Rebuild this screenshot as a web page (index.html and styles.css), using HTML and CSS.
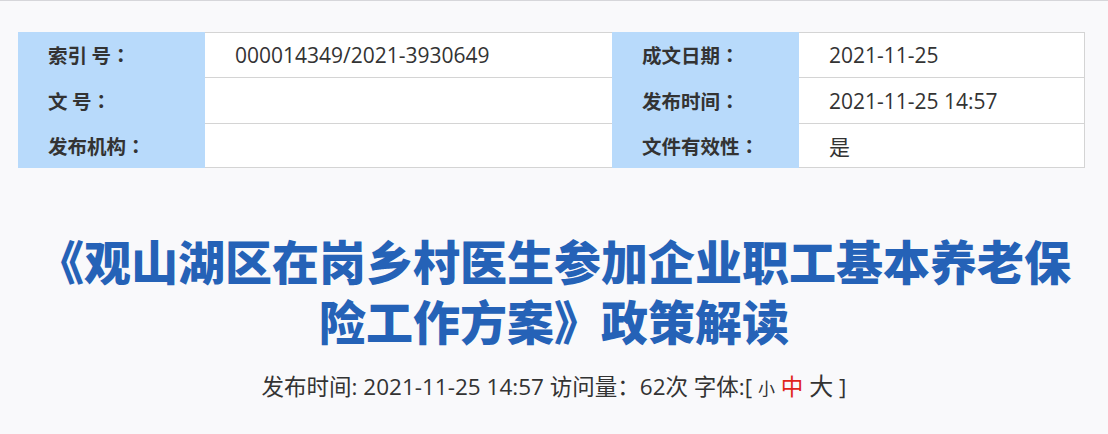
FILE: index.html
```html
<!DOCTYPE html>
<html lang="zh-CN">
<head>
<meta charset="utf-8">
<link rel="stylesheet" href="styles.css">
</head>
<body>
<div class="page">
  <div class="info">
    <div class="lab">索引 号<span class="c">：</span></div>
    <div class="val">000014349/2021-3930649</div>
    <div class="lab">成文日期<span class="c">：</span></div>
    <div class="val last">2021-11-25</div>
    <div class="lab">文 号<span class="c">：</span></div>
    <div class="val"></div>
    <div class="lab">发布时间<span class="c">：</span></div>
    <div class="val last">2021-11-25 14:57</div>
    <div class="lab">发布机构<span class="c">：</span></div>
    <div class="val bottom"></div>
    <div class="lab">文件有效性<span class="c">：</span></div>
    <div class="val last bottom">是</div>
  </div>
  <h1 class="title">《观山湖区在岗乡村医生参加企业职工基本养老保险工作方案》政策解读</h1>
  <div class="meta">发布时间: 2021-11-25 14:57 访问量<span class="c">：</span>62次 字体:[ <span class="s">小</span> <span class="m">中</span> <span class="l">大</span> ]</div>
</div>
</body>
</html>
```
FILE: styles.css
```css
html, body {
  margin: 0;
  padding: 0;
}
body {
  background: #f9f9fb;
  border-top: 1px solid #d6d6da;
  font-family: "Open Sans", "Noto Sans CJK SC", sans-serif;
  color: #333;
  width: 1108px;
  height: 433px;
  overflow: hidden;
}
.page {
  padding-top: 31px;
}
.info {
  margin-left: 18px;
  width: 1067px;
  display: grid;
  grid-template-columns: 187px 407px 187px 286px;
  grid-template-rows: 45px 46px 45px;
}
.lab {
  background: #b8dafb;
  font-family: "Noto Sans CJK SC", sans-serif;
  font-size: 19.5px;
  font-weight: bold;
  color: #333;
  padding-left: 30px;
  display: flex;
  align-items: center;
}
.c {
  font-family: "Noto Sans CJK TC", sans-serif;
}
.val {
  background: #fff;
  border-top: 1px solid #d4d4d4;
  font-size: 21px;
  color: #333;
  padding-left: 30px;
  display: flex;
  align-items: center;
}
.val.last {
  border-right: 1px solid #d4d4d4;
}
.val.bottom {
  border-bottom: 1px solid #d4d4d4;
}
.title {
  margin: 62px 0 0 0;
  padding: 0 20px;
  text-align: center;
  font-family: "Noto Sans CJK SC", sans-serif;
  font-size: 47px;
  line-height: 60px;
  font-weight: 900;
  color: #2562b7;
}
.meta {
  margin-top: 20px;
  text-align: center;
  font-size: 22.5px;
  line-height: 30px;
  color: #333;
}
.meta .s { font-size: 17px; }
.meta .m { color: #e0231c; }
.meta .l { font-size: 24px; }
```
